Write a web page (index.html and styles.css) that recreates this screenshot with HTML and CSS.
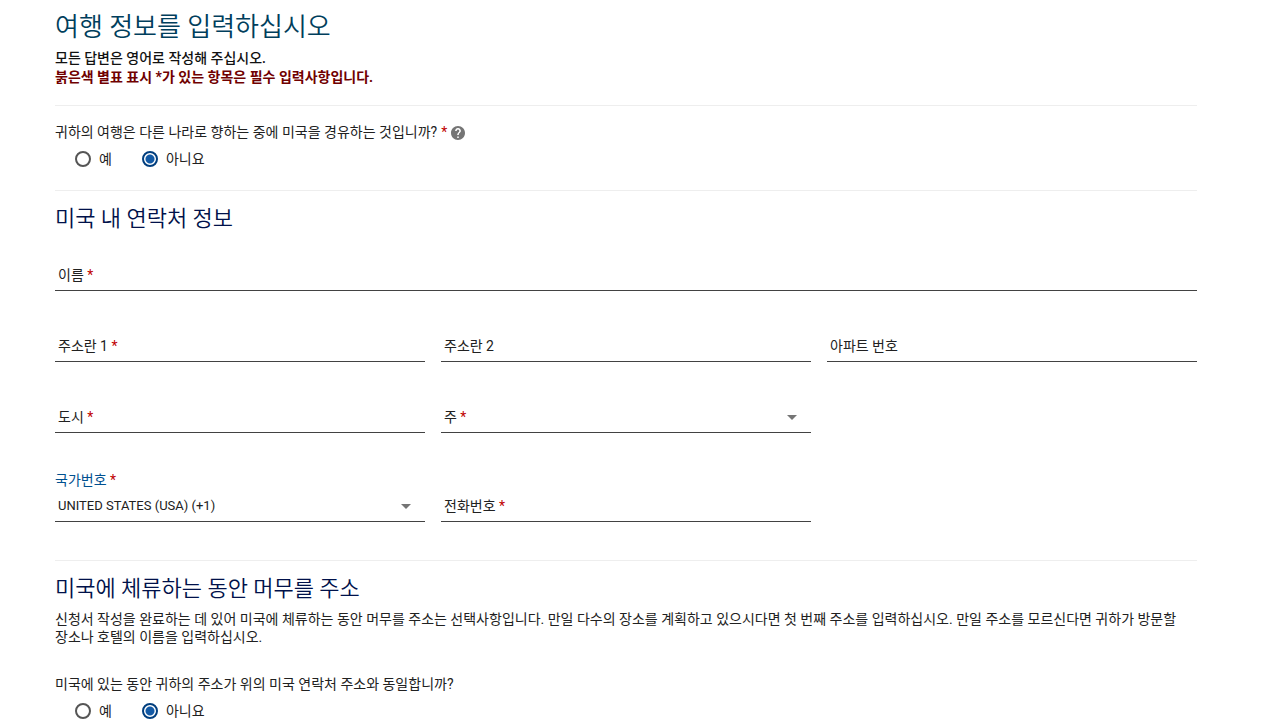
FILE: index.html
```html
<!DOCTYPE html>
<html lang="ko">
<head>
  <meta charset="UTF-8">
  <meta name="viewport" content="width=device-width, initial-scale=1">
  <title>여행 정보</title>
  <link rel="stylesheet" href="styles.css">
</head>
<body>

<form class="travel-form">
  <h1>여행 정보를 입력하십시오</h1>
  <p class="notice">모든 답변은 영어로 작성해 주십시오.</p>
  <p class="notice notice-required">붉은색 별표 표시 *가 있는 항목은 필수 입력사항입니다.</p>

  <hr>

  <fieldset class="question">
    <legend>
      귀하의 여행은 다른 나라로 향하는 중에 미국을 경유하는 것입니까?<span class="req">*</span><button type="button" class="help" aria-label="도움말"><svg viewBox="2 2 20 20" width="14" height="14"><path fill="#757575" d="M12 2C6.48 2 2 6.48 2 12s4.48 10 10 10 10-4.48 10-10S17.52 2 12 2zm1 17h-2v-2h2v2zm2.07-7.75l-.9.92C13.45 12.9 13 13.5 13 15h-2v-.5c0-1.1.45-2.1 1.17-2.83l1.24-1.26c.37-.36.59-.86.59-1.41 0-1.1-.9-2-2-2s-2 .9-2 2H8c0-2.21 1.79-4 4-4s4 1.79 4 4c0 .88-.36 1.68-.93 2.25z"/><path fill="none" stroke="#fff" stroke-width="1" d="M9 9c0-1.7 1.3-3 3-3s3 1.3 3 3c0 2.500-3 2.800-3 6M11.500 18h1"/></svg></button>
    </legend>
    <div class="radios">
      <label><input type="radio" name="transit" value="yes">예</label>
      <label><input type="radio" name="transit" value="no" checked>아니요</label>
    </div>
  </fieldset>

  <hr>

  <!-- 미국 내 연락처 -->
  <h2>미국 내 연락처 정보</h2>

  <div class="fields">
    <div class="field wide">
      <label for="name">이름 <span class="req">*</span></label>
      <input type="text" id="name" required>
    </div>

    <div class="field">
      <label for="address1">주소란 1 <span class="req">*</span></label>
      <input type="text" id="address1" required>
    </div>
    <div class="field">
      <label for="address2">주소란 2</label>
      <input type="text" id="address2">
    </div>
    <div class="field">
      <label for="apartment">아파트 번호</label>
      <input type="text" id="apartment">
    </div>

    <div class="field">
      <label for="city">도시 <span class="req">*</span></label>
      <input type="text" id="city" required>
    </div>
    <div class="field">
      <label for="state">주 <span class="req">*</span></label>
      <select id="state" required>
        <option value=""></option>
        <option value="CA">CALIFORNIA</option>
        <option value="NY">NEW YORK</option>
      </select>
      <svg class="arrow" viewBox="0 0 10 5" width="10" height="5"><path d="M0 0h10L5 5z"/></svg>
    </div>

    <div class="first-col">
      <label class="top-label" for="country">국가번호 <span class="req">*</span></label>
      <div class="field">
        <select id="country" required>
          <option>UNITED STATES (USA) (+1)</option>
        </select>
        <svg class="arrow" viewBox="0 0 10 5" width="10" height="5"><path d="M0 0h10L5 5z"/></svg>
      </div>
    </div>
    <div class="field">
      <label for="phone">전화번호 <span class="req">*</span></label>
      <input type="tel" id="phone" required>
    </div>
  </div>

  <hr>

  <!-- 체류 주소 -->
  <h2>미국에 체류하는 동안 머무를 주소</h2>
  <p class="info">신청서 작성을 완료하는 데 있어 미국에 체류하는 동안 머무를 주소는 선택사항입니다. 만일 다수의 장소를 계획하고 있으시다면 첫 번째 주소를 입력하십시오. 만일 주소를 모르신다면 귀하가 방문할 장소나 호텔의 이름을 입력하십시오.</p>

  <fieldset class="question">
    <legend>미국에 있는 동안 귀하의 주소가 위의 미국 연락처 주소와 동일합니까?</legend>
    <div class="radios">
      <label><input type="radio" name="same" value="yes">예</label>
      <label><input type="radio" name="same" value="no" checked>아니요</label>
    </div>
  </fieldset>
</form>

</body>
</html>
```
FILE: styles.css
```css
* {
  box-sizing: border-box;
}
body {
  margin: 0;
  background-color: #fff;
  color: #212121;
  font-family: Roboto, "Noto Sans CJK KR", sans-serif;
  font-size: 14px;
  line-height: 18px;
  word-break: keep-all;
}
.travel-form {
  padding: 10px 83px 0 55px;
}
h1 {
  margin: 0 0 5px;
  color: #003e5c;
  font-size: 26px;
  font-weight: 350;
  line-height: 34px;
}
h2 {
  margin: 0;
  color: #00114a;
  font-size: 22px;
  font-weight: 350;
  line-height: 28px;
}
hr {
  height: 1px;
  margin: 0;
  border: 0;
  background-color: #eee;
}
.notice {
  margin: 0;
  color: #111;
  font-weight: 500;
  line-height: 19px;
}
.notice-required {
  margin-bottom: 18px;
  color: #700000;
  font-weight: bold;
}
.req {
  color: #c00000;
}
.question {
  margin: 0;
  padding: 17px 0 22px;
  border: 0;
}
.question legend {
  float: left;
  width: 100%;
  padding: 0;
}
.question .req {
  margin-left: 4px;
}
.help {
  margin-left: 4px;
  padding: 0;
  border: 0;
  background: none;
  line-height: 0;
  vertical-align: middle;
  cursor: pointer;
}
.radios {
  display: flex;
  gap: 30px;
  clear: both;
  padding: 9px 0 0 20px;
}
.radios label {
  display: flex;
  align-items: center;
  gap: 8px;
}
input[type="radio"] {
  appearance: none;
  width: 16px;
  height: 16px;
  margin: 0;
  border: 2px solid #555;
  border-radius: 50%;
}
input[type="radio"]:checked {
  border-color: #003e7e;
  background: radial-gradient(circle, #1259a5 4px, #fff 5px);
}
hr + h2 {
  margin-top: 14px;
}
.fields {
  display: grid;
  grid-template-columns: repeat(3, 1fr);
  align-items: end;
  gap: 38px 16px;
  margin: 25px 0 38px;
}
.field {
  display: flex;
  align-items: center;
  height: 33px;
  padding: 2px 3px 0;
  border-bottom: 1px solid #424242;
}
.wide {
  grid-column: 1 / -1;
}
.first-col {
  grid-column: 1;
}
.top-label {
  display: block;
  color: #00508f;
}
.field input,
.field select {
  flex: 1;
  min-width: 0;
  height: 30px;
  padding: 0;
  border: 0;
  outline: 0;
  background: none;
  color: inherit;
  font: inherit;
  appearance: none;
}
.field select {
  font-size: 13px;
}
.arrow {
  margin-right: 11px;
  fill: #757575;
}
.info {
  margin: 7px 0 12px;
}
```
